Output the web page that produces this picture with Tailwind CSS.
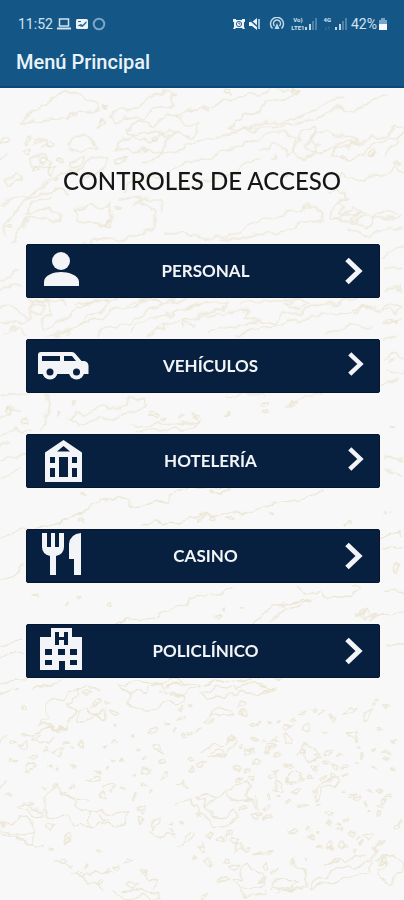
<!DOCTYPE html>
<html lang="es">
<head>
<meta charset="utf-8">
<meta name="viewport" content="width=device-width, initial-scale=1">
<title>Menú Principal</title>
<script src="https://cdn.jsdelivr.net/npm/@tailwindcss/browser@4"></script>
</head>
<body class="flex min-h-screen flex-col bg-[#f8f8f8]">

<header class="border-b-2 border-[#0c4879] bg-[#145786] px-4 pt-4 pb-2.5 font-['Roboto',sans-serif] text-[#eaf2fa]">
  <div class="flex h-4 items-center justify-between pr-px pl-0.5 text-sm leading-4 text-[#d3e2f0]">
    <div class="flex items-center gap-1">
      <span>11:52</span>
      <svg class="h-3 w-3.5" viewBox="0 0 14 12" fill="none" stroke="currentColor"><rect x="2.5" y="1" width="9" height="7" stroke-width="1.5"/><path d="M0 10.5h14" stroke-width="2"/></svg>
      <svg class="ml-px h-3 w-3" viewBox="0 0 12 12"><rect y="1" width="12" height="10" rx="1.5" fill="#edf4fb"/><path d="M2 3h3v1H2zM1.500 7.500 5 6l1.500 1L10.500 3v2L6.500 9z" fill="#28638f"/></svg>
      <svg class="h-3.5 w-3.5" viewBox="0 0 14 14" fill="none"><circle cx="7" cy="7" r="5.300" stroke="#7ca6c8" stroke-width="2"/></svg>
    </div>
    <div class="flex items-center">
      <svg class="h-3 w-3" viewBox="0 0 12 12"><path d="M0 1h3v1h6V1h3v3h-1v5l1 2h-2l-1-1H3l-1 1H0l1-2V4H0z" fill="#edf4fb"/><circle cx="6" cy="6" r="2.600" fill="none" stroke="#28638f"/><path d="M6 4.500V6h1.300" fill="none" stroke="#28638f"/></svg>
      <svg class="ml-1 h-3 w-3" viewBox="0 0 12 12"><path d="M0 4h3l5-4v12L3 8H0z" fill="#edf4fb"/><path d="m0 1 11 10" stroke="#28638f" stroke-width="1.500"/><path d="M10 1v10" stroke="#d3e2f0" stroke-width="1.500"/></svg>
      <svg class="ml-2 h-3.5 w-4" viewBox="0 0 16 14" fill="none" stroke="#c3d8ea" stroke-width="1.500"><path d="M3.500 11.500a6.500 6.500 0 1 1 9 0M5.500 9a3.500 3.500 0 1 1 5 0"/><path d="m8 6-2.500 6h5z" fill="#c3d8ea" stroke="none"/></svg>
      <span class="ml-1.5 flex flex-col text-center text-[6px] leading-[8px] font-bold"><span>Vo)</span><span>LTE1</span></span>
      <svg class="ml-px h-3 w-3" viewBox="0 0 12 12"><path d="M0 9h2v3H0zM4 6h2v6H4z" fill="#c3d8ea"/><path d="M7 3h2v9H7zM10 0h2v12h-2z" fill="#4f83aa"/></svg>
      <span class="ml-1.5 flex flex-col text-center text-[6px] leading-[8px] font-bold"><span>4G</span><span class="text-[#6c9abc]">↓↑</span></span>
      <svg class="ml-1 h-3 w-3" viewBox="0 0 12 12"><path d="M0 9h2v3H0zM4 6h2v6H4z" fill="#c3d8ea"/><path d="M7 3h2v9H7zM10 0h2v12h-2z" fill="#4f83aa"/></svg>
      <span class="ml-1">42%</span>
      <svg class="ml-0.5 h-3 w-2" viewBox="0 0 8 12"><path d="M2 0h4v2h2v5H0V2h2z" fill="#79a4c6"/><path d="M0 6h8v6H0z" fill="#f4f9ff"/></svg>
    </div>
  </div>
  <h1 class="mt-4 text-xl leading-7 font-medium">Menú Principal</h1>
</header>

<main class="relative flex-1 overflow-hidden px-6 pb-16 font-['Lato',sans-serif]">
  <svg class="absolute inset-0 h-full w-full" viewBox="0 0 1212 2436" preserveAspectRatio="xMidYMin slice" fill="none" stroke="#ebe6d5" stroke-width="4" stroke-linejoin="round" aria-hidden="true">
    <filter id="rough" x="0" y="0" width="100%" height="100%">
      <feTurbulence type="fractalNoise" baseFrequency="0.025" numOctaves="2" seed="4"/>
      <feDisplacementMap in="SourceGraphic" scale="36" xChannelSelector="R" yChannelSelector="G"/>
    </filter>
    <g filter="url(#rough)">
    <g transform="translate(0 6)">
      <path d="M58 92 92 66l30-10 42-34 40-16 44 18 50 14v22l-28 10-30-12-34 26-40-4-42 14-24-2z"/>
      <path d="m330 86 24-32 54 2 36-34 48-16 34 4-20 40-48 14-32 26-50-10-38 16z"/>
      <path d="m378 116 40-20 46 8 40-28 30 4 20 26 42-6-26 40-32-8-44 10-20-22-46 14-50-8z"/>
      <path d="m350 160 50-26 24 22 48-12 34-26 28 14-42 24-6 34-40-16-52 14-44-12z"/>
      <path d="m520 80 44-24 72-4 58-32 64-8 70-14 66 4-34 24-66 8-24 34-62 18-26 30 54 8 60-16 68 2 42-20 52-8 60-28 48 8 24-24 66-22"/>
      <path d="m0 344 42-20 40 4 32-32 30-32 42-8 64-24 30-32 44 8-12 26-36 12-30 30"/>
      <path d="m420 216 58-20 64-16 50-28 84-16 64-20 60-22 42 8 60-24 48-28 40-20 48-2M510 244l64-34 72-10 40-26 76-22 56-24 40-2 36 20-16 26 20 34 46-12 14-28-20-24 36-18 22 20 40-12 38 18-28 22-34-6-16 32 40 18 62-30 34-32 56-10 46-28"/>
      <path d="m780 186 44-20 26 4 4 26 44-36 8-34 42-18-4 34-28 20 12 24 36 4 32-24 50-14 46 8 26-30 44 10 26-38 24 18-20 32-32 24-6 22"/>
      <path d="m200 166 24-28 50 6 12 30-30 14-24-14-28 8zM88 214l40-24 34 22-24 18-38-2zM100 148l36 4-26 8zM210 212l46-8-12 20-34 12zM18 270l28-14 18 14-36 10z"/>
      <path d="m16 440-2-36 28-36 28-32 44-20 52-14 42 12M40 450l34-48 12-24 70 18 30-10-8-20-44-10-54 14 22-32 46-18M222 362l52-16 56 4 6 36-24 18-90-10zM364 330l44-10 38 28 26 16-14 56-40 14-64 16-70-4-50 28"/>
      <path d="m366 308 24-34 62-18 38 8 20 34 78-4 24-30 50 4 34-20 48-30 38-12M400 344l38-24 38 18 14 26"/>
      <path d="m498 432 70-2 46 14 62-2 50-16 50-38 70-10 54-24 42-8 28 24-8 24-66 4-42 30-68-2-46 20-78 4"/>
      <path d="m1000 272 30-22 46 22 30-16 40 8 36-26 28 6M984 310l34-16 26 30-42 28-18 36 42-6 34-32 26 20-30 22 40 22 34-40 60-10M1000 380l58 20 42-28 64 18 46-20M1010 346l24 8-12 18 44 6 30-12M1046 412l60 28 38-28 66 6"/>
      <path d="m0 210 20-20M0 600l30-12 40-4M0 570l60-32M90 630l40 8 54-8 20 20M230 640l70-8 54-4M380 650l60-26 50 12 70-8M720 642l70-12 62 4 50-12M1150 500l62-36M1150 540l60-12M1150 600l58-8"/>
    </g>
    <g transform="translate(0 606)">
      <path d="m0 100 28-6 38 12 28-28-10-30 24-18 40 14 4 32-30 14 16 26 54-28 58-44 42-12 44 2-26 28-58 16-22 28-58 22-30 18M0 60l40-8 28 16 12 28M12 130l24-20 52 24M90 40l46 10-10 24-28-4z"/>
      <path d="m200 130 44-36 60-8 58-32 40 4 28-26 64 4-20 20-50 14-34 30-70 10-30 22M390 118l66-34 60-8 40-26 66-12 66 2-20 22-66 10-34 20-76 16-48 24M550 112l10-14 26 14M618 132l50-18 54-6 58-20 40 10 20-22 70-10 28-22 54-4 90-24M620 76l50 4 18-20 60 2-20 18 40 6M700 134l90-24 70-8 90-26 90-8 80-24M850 46l40-14 38 8-30 18zM980 130l80-24 60 2M1060 74l40-22 46 10"/>
      <path d="m1150 60 16-18 30 12-12 16zM1170 100l40-10M1150 150l30-8M1148 214l36-22 28 18M1156 240l40 10 16-14M1142 280l50-8"/>
      <path d="m0 320 40-10 40 4M136 316l14 22-16 40-8 46M0 380l36-26 28 4M0 440l50-24 50 2M204 386l18-18 50-4 30-14 62 4 24-30 46-4 8 20-28 22-54 8-20 18-60 2-40 20zM392 402l44 10 36-14 44 6 84-12M404 424l70-4 72 2 58-28M674 326l56-16 64 2M856 352l40-18M900 326l40-18 30 4M0 470l30-10M0 510l40-16 38-6M0 566l70-40M1150 500l62 16M1150 540l62 20"/>
    </g>
    <g transform="translate(0 1176)">
      <path d="m100 146 56-14 66-22 34-22 50-24 50-12 36 10-2 20 50-10 60-12v-20l50-12 88-6 50 2-20 18-40-10M0 180l80-34M0 296l30-10 46-26M422 138l50-12 66 6 40-16 26-14 24 8 54-12 60 4 70-30 64-10 60-18 34-12"/>
      <path d="m340 432 62-16 56-4 44-22 54-14 16-24 62-6 60-18M760 432l52-46 52-14 74-14-38 22-54 8-38 36M892 316l26 26 46-8 24 20 58-6 36-20-20-16M1082 400l20-10 14 14-24 10zM1106 420l50-18 56-8M1150 330l62 8M1140 170l62-14 10 12M1148 200l60 4M1174 100h8M0 500l26-10 44-10M0 534l28-18 46-2M1152 500l60-12"/>
      <path d="m0 612 42-18 40 6M220 628l80-6M350 614l70-12 54 8 40-8 60 10M620 612l60-14 62 8 50-10 60 6"/>
    </g>
    <g transform="translate(0 1776)">
      <path d="m136 88 18-36 38 10 14-28 34-8-2 24-32 18 22 22-22 24-4 30-30 8-22-14-34-4 26-22zM0 44l40-22M96 22l60-4 16-14M356 16l32 18-8 40 46 22 60-22 60-10 6-22-50-10-20-26-34 10-14 26-60-8zM480 40l60 2 64-24-40-8-60 8M600 46l54-26 40 6 60-12 70 14-50 8-60-6-38 28-40-4z"/>
      <path d="m230 126 6-36 26-12 20 28-22 26zM262 84l28 30 26-4 4-22M108 156l42-12 48 4M66 158l58 6-20 16 30 14 26-22M608 132l26-32 18-18 40 2 6 18-36 10-28-12-20 26zM606 222l34-28 34 4 26-26 6 16-26 34-40 14-24-8M628 218l40-8 6 16-40 6zM1030 100l18-24 28 2-24 16zM1086 132l6-32 22-12-10 36zM1042 158l38 2-16 28zM900 216l16-26 24 14 28 34-40 2z"/>
      <path d="m142 348 18-34 28 24 30 20 20 32 40 4 28-10 30 24 50-4-6 20-40 16-30-16-34 20-50-10-20-30-38 10-36-22zM214 360l60 4M270 394l-14 32 22 18M300 394l20 28M310 332l26-26 14 10-14 20M526 372l30-10 30 12 26 40 30 26 40-4 34-20-20-26-24 26-40-4-20-46-30-8 32-14 44 10 26-32 60-16 10 12-20 24 10 16-46 6-20-26M620 380l30-24M730 364l20-14 20 36M760 348l18 40M570 446l-14 38-30 8M584 452l-14 40M454 432l24-26 2 24-22 16zM448 446l20 24 56-6-18-16"/>
      <path d="m0 424 34 14 26-28 34 8 2 30-28 22-36-6-30-24M0 454l40 20 56 16v-40M56 384l20-12 40 14 14 18-30 4-12-14zM142 448l12-14 10 6-16 20zM190 466l24-6v26l-22 2zM100 494l34 4M162 540l20 18 32-4M216 574l46 24 44 34M258 570l30 10 50-10M336 626l40 28 106-2v-18l-40 6-44-10-30 2M376 616l14-14 26 8-16 14zM424 568l24 28 26 6-16 22M940 358l4-18 30-34 48-14 4 16-44 10-26 34z"/>
      <path d="m690 600 30-8 4-24 22-12 36 24 16 30-30 14-40-4zM720 622l8 30 70-4-4-22M810 630l20-40 40 10 30 4-32 26-50-8M870 554l12-14 6 24 30 16v40l-10 12-40-6-40 10M930 620l10-20 48-2 6-22 50-16 64-8 10-46 44-20M930 620l70-10 60-26 50-4 8-34M980 554l30-16 26 12 30-30 30 14M1140 536l26-10 40 16 6 32-26 8-18 26-28-12 2-26 16-18zM1126 540l20-16 40 2M758 524l50-12-10 14zM856 300l24-20 20 2-22 26zM826 332l10-28 18 24zM848 196l10-36 20 34zM524 310l20-8 30 20M462 194l20 2 12 20-26-4zM0 190l10-30M0 326l26-24"/>
    </g>
    <path id="specks"/>
    </g>
  </svg>

  <div class="relative">
    <h2 class="pt-[77px] text-center text-2xl leading-8 font-medium text-[#151515]">CONTROLES DE ACCESO</h2>

    <nav class="mt-[47px] ml-0.5 grid gap-[41px] text-[17px] leading-6 font-bold text-[#f2f4f7]">
      <a href="#personal" class="flex h-[54px] items-center rounded-xs border border-[#061530] bg-[#08203f] pl-2.5">
        <svg class="h-[54px] w-[52px]" viewBox="0 0 52 54" fill="currentColor"><circle cx="24" cy="17" r="9"/><path d="M7 42v-4c0-7 10-10 17-10s18 3 18 10v4z"/></svg>
        <span class="flex-1 text-center">PERSONAL</span>
        <span class="flex w-[57px] justify-center pl-1.5"><svg class="h-7 w-[18px]" viewBox="0 0 18 28" fill="none" stroke="currentColor" stroke-width="5"><path d="m2 2.500 12 11.500L2 25.500"/></svg></span>
      </a>
      <a href="#vehiculos" class="flex h-[54px] items-center rounded-xs border border-[#061530] bg-[#08203f] pl-2.5">
        <svg class="h-[54px] w-[52px]" viewBox="0 0 52 54" fill="currentColor"><path fill-rule="evenodd" d="M4 13h31q2 0 3.500 2l6 7h3q4 1 4 5v8h-5a7.500 7.500 0 0 1-14 0H20a7.500 7.500 0 0 1-14 0H1V16q0-3 3-3zm1 4v5h18v-5zm22 0v5h12l-4-5z"/><circle cx="13" cy="33" r="7.500"/><circle cx="39.500" cy="33" r="7.500"/><circle cx="13" cy="33" r="3.500" fill="#08203f"/><circle cx="39.500" cy="33" r="3.500" fill="#08203f"/></svg>
        <span class="flex-1 text-center">VEHÍCULOS</span>
        <span class="flex w-[47px] justify-center pb-1"><svg class="h-[26px] w-4" viewBox="0 0 18 28" fill="none" stroke="currentColor" stroke-width="5"><path d="m2 2.500 12 11.500L2 25.500"/></svg></span>
      </a>
      <a href="#hoteleria" class="flex h-[54px] items-center rounded-xs border border-[#061530] bg-[#08203f] pl-2.5">
        <svg class="h-[54px] w-[52px]" viewBox="0 0 52 54" fill="currentColor"><path fill-rule="evenodd" d="M26.500 6 45 18.500V48H8V18.500zm0 6L20 17.500h13zM13 23v6h5v-6zm9 0v20h9V23zm13 0v6h5v-6zM13 34v9h5v-9zm22 0v9h5v-9z"/></svg>
        <span class="flex-1 text-center">HOTELERÍA</span>
        <span class="flex w-[47px] justify-center pb-1"><svg class="h-[26px] w-4" viewBox="0 0 18 28" fill="none" stroke="currentColor" stroke-width="5"><path d="m2 2.500 12 11.500L2 25.500"/></svg></span>
      </a>
      <a href="#casino" class="flex h-[54px] items-center rounded-xs border border-[#061530] bg-[#08203f] pl-2.5">
        <svg class="h-[54px] w-[52px]" viewBox="0 0 52 54" fill="currentColor"><path d="M5 4h5v14h4V4h4v14h4V4h5v14q0 7-8 9v19h-6V27q-8-2-8-9zM44 4v42h-7V30h-5V15q1-10 12-11z"/></svg>
        <span class="flex-1 text-center">CASINO</span>
        <span class="flex w-[57px] justify-center pl-1.5"><svg class="h-7 w-[18px]" viewBox="0 0 18 28" fill="none" stroke="currentColor" stroke-width="5"><path d="m2 2.500 12 11.500L2 25.500"/></svg></span>
      </a>
      <a href="#policlinico" class="flex h-[54px] items-center rounded-xs border border-[#061530] bg-[#08203f] pl-2.5">
        <svg class="h-[54px] w-[52px]" viewBox="0 0 52 54" fill="currentColor"><path fill-rule="evenodd" d="M14 4h21v9h10v33H28V37h-6v9H3V13h11zm4 4v13h4v-5h5v5h4V8h-4v5h-5V8zM8 25v6h7v-6zm13 0v6h7v-6zm12 0v6h7v-6zM8 36v5h7v-5zm25 0v5h7v-5z"/></svg>
        <span class="flex-1 text-center">POLICLÍNICO</span>
        <span class="flex w-[57px] justify-center pl-1.5"><svg class="h-7 w-[18px]" viewBox="0 0 18 28" fill="none" stroke="currentColor" stroke-width="5"><path d="m2 2.500 12 11.500L2 25.500"/></svg></span>
      </a>
    </nav>
  </div>
</main>

<script>
// Small pebble shapes of the terrain pattern: x, y, radius
const specks = [
  [318,56,5],[300,108,10],[12,160,14],[82,160,8],[145,170,10],[85,190,12],[185,210,8],[130,215,12],[105,240,10],[150,245,14],[170,275,6],[360,220,12],[434,190,7],[462,150,9],[614,68,6],[680,10,10],[880,10,12],[328,404,10],[355,360,6],[826,210,7],[1030,214,6],[850,265,5],[1120,195,8],[1190,230,7],[30,420,8],
  [1168,700,9],[1190,706,6],[1180,820,5],[20,960,9],[75,1000,11],[175,980,5],[220,950,6],[460,985,9],[490,990,6],[550,984,7],[586,984,7],[676,976,5],[790,946,10],[800,972,7],[880,950,10],[1180,1016,4],
  [246,1224,6],[240,1274,6],[245,1300,8],[608,1290,7],[640,1290,8],[684,1294,8],[1036,1306,7],[1052,1296,6],[814,1268,4],[1156,1274,5],[1184,1442,9],[110,1522,4],[196,1546,4],[240,1530,7],[325,1544,9],[652,1590,7],[664,1566,5],[725,1556,5],[1080,1575,9],[1124,1582,5],
  [52,1810,6],[76,1860,9],[264,1816,9],[286,1846,9],[318,1848,8],[348,1876,9],[345,1908,4],[300,1882,12],[462,1922,12],[444,1940,4],[404,1946,3],[500,1904,5],[540,1862,7],[546,1890,8],[572,1860,5],[598,1926,8],[626,1900,10],[570,1936,7],[520,1928,6],[550,1948,7],[730,1850,14],[730,1878,9],[770,1904,6],[756,1908,7],[800,1900,5],[830,1894,5],[880,1894,7],[910,1868,6],[938,1868,7],[964,1874,7],[998,1888,9],[918,1920,14],[862,1914,10],[972,1938,5],[1130,1846,9],[1162,1858,6],[1136,1924,7],[1180,1956,6],[1158,1988,8],[1128,1984,5],[1076,1980,5],[1086,2004,5],[1160,2014,6],[1122,2036,4],[1066,2020,4],[1180,2046,5],
  [36,1966,10],[72,1970,14],[36,2018,8],[100,2010,13],[140,1986,8],[176,1990,16],[198,1966,6],[216,1984,4],[246,1964,8],[338,1962,8],[318,1980,4],[414,1984,6],[340,2016,5],[366,2008,4],[428,2012,5],[488,2022,9],[90,2042,16],[152,2038,5],[174,2038,5],[218,2036,6],[292,2050,5],[324,2040,5],[280,2074,13],[440,2048,10],[408,2064,4],[494,2066,12],[130,2098,4],[212,2092,8],[184,2112,8],[306,2126,10],[366,2106,5],[402,2126,7],[428,2098,8],[456,2112,5],[424,2162,12],[416,2200,8],[430,2180,6],[94,2142,6],[28,2126,6],
  [576,2014,8],[600,2030,9],[574,2042,8],[690,1956,10],[726,1976,8],[750,1992,10],[764,1954,6],[790,1960,7],[812,1974,9],[826,1956,8],[800,1990,9],[832,2000,9],[774,2024,10],[714,2042,9],[740,2046,8],[826,2046,7],[820,2066,12],[856,2034,8],[870,2034,9],[900,1996,9],[952,2004,8],[986,1990,10],[946,2034,9],[980,2028,9],[1006,2034,8],[1022,2006,5],[1036,2034,8],[1042,2066,5],[1000,2064,9],[964,2070,8],[932,2068,6],[904,2070,7],[756,2072,9],[714,2078,7],[886,2110,10],[868,2144,6],[910,2152,8],[838,2128,5],[806,2128,7],[800,2160,10],[780,2176,8],[740,2132,8],[726,2164,9],[770,2186,9],[800,2188,8],[950,2148,5],[1032,2112,5],[1058,2120,9],[1076,2130,9],[1110,2112,6],[1134,2108,7],[1164,2124,9],[1150,2140,8],[1138,2158,10],[1130,2182,8],[1096,2146,6],[1102,2170,5],[996,2178,10],[1016,2200,4],[1040,2196,6],[1020,2222,7],[1056,2232,9],[1110,2244,14],[1072,2250,4],[990,2208,5],[988,2276,10],[1028,2276,11],[958,2274,5],[918,2228,5],[880,2230,9],[934,2240,7],[954,2230,4],[1196,2208,9],[1064,2284,5],[1086,2268,6],[1124,2286,6],
  [158,2286,4],[202,2256,9],[300,2286,6],[258,2326,5],[188,2324,10],[354,2332,10],[386,2318,9],[322,2346,8],[300,2388,9],[240,2356,10],[428,2350,6],[544,2210,5],[512,2210,6],[586,2310,5],[624,2320,10],[684,2318,10],[706,2336,12],[668,2378,12],[612,2426,10],[914,2314,4],[820,2346,7],[794,2332,10],[790,2374,8],[704,2256,12],[664,2256,12],[628,2242,9],[608,2280,11],[716,2276,12],[740,2284,9],[688,2236,9],[1004,2320,9],[1150,2318,9]
];
const shape = [1, .7, 1.1, .65, 1, .8, .6];
document.getElementById('specks').setAttribute('d', specks.map(([x, y, r], i) =>
  'M' + shape.map((_, k) => {
    const a = k * Math.PI * 2 / shape.length, s = r * shape[(k + i) % shape.length];
    const u = Math.cos(a) * s * 1.2, v = Math.sin(a) * s * .8;
    return Math.round(x + u + v * .3) + ' ' + Math.round(y + v - u * .3);
  }).join('L') + 'Z').join(''));
</script>
</body>
</html>
